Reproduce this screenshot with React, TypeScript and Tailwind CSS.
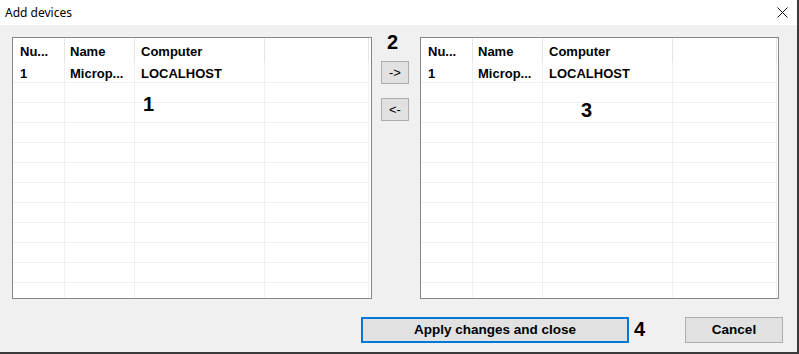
import React from 'react';

interface DeviceRow {
  num: string;
  name: string;
  computer: string;
}

const devices: DeviceRow[] = [{ num: '1', name: 'Microp...', computer: 'LOCALHOST' }];

// empty grid rows under the data, the list clips the last one
const emptyRows = Array.from({ length: 11 }, (_, i) => i);

function DeviceList({ widthClass }: { widthClass: string }) {
  return (
    <div className={`${widthClass} h-[262px] border border-[#828790] bg-white overflow-hidden`}>
      {/* header */}
      <div className="flex h-[24px] w-[356px] font-bold text-[13px] text-black">
        <div className="w-[52px] pl-[7px] pt-[4px] flex items-center border-r border-[#e5e5e5]">Nu...</div>
        <div className="w-[70px] pl-[5px] pt-[4px] flex items-center border-r border-[#e5e5e5]">Name</div>
        <div className="w-[130px] pl-[6px] pt-[4px] flex items-center border-r border-[#e5e5e5]">Computer</div>
        <div className="w-[104px] border-r border-[#e5e5e5]" />
      </div>
      {devices.map((d) => (
        <div key={d.num} className="flex h-[21px] w-[356px] border-b border-[#f0f0f0] font-bold text-[13px] text-black">
          <div className="w-[52px] pl-[7px] pt-[3px] flex items-center border-r border-[#f0f0f0]">{d.num}</div>
          <div className="w-[70px] pl-[5px] pt-[3px] flex items-center border-r border-[#f0f0f0]">{d.name}</div>
          <div className="w-[130px] pl-[6px] pt-[3px] flex items-center border-r border-[#f0f0f0]">{d.computer}</div>
          <div className="w-[104px] border-r border-[#f0f0f0]" />
        </div>
      ))}
      {emptyRows.map((i) => (
        <div key={i} className="flex h-[20px] shrink-0 w-[356px] border-b border-[#f0f0f0]">
          <div className="w-[52px] border-r border-[#f0f0f0]" />
          <div className="w-[70px] border-r border-[#f0f0f0]" />
          <div className="w-[130px] border-r border-[#f0f0f0]" />
          <div className="w-[104px] border-r border-[#f0f0f0]" />
        </div>
      ))}
    </div>
  );
}

export default function App() {
  return (
    <div
      className="relative w-[799px] h-[354px] flex flex-col bg-[#f0f0f0] border-r-2 border-b-2 border-[#3a3a3a] text-black"
      style={{ fontFamily: '"Liberation Sans", Arial, sans-serif' }}
    >
      {/* title bar */}
      <div className="h-[25px] bg-white flex items-center justify-between pl-[5px] pr-[8px]">
        <span className="text-[12px]" style={{ fontFamily: '"Noto Sans", sans-serif' }}>Add devices</span>
        <svg width="11" height="11" viewBox="0 0 11 11" className="mr-[1px]">
          <path d="M0.5 0.5 L10.5 10.5 M10.5 0.5 L0.5 10.5" stroke="#111" strokeWidth="1" fill="none" />
        </svg>
      </div>

      {/* lists */}
      <div className="flex pt-[12px] pl-[12px]">
        <DeviceList widthClass="w-[360px]" />
        <div className="w-[48px] flex flex-col pl-[9px] pt-[24px]">
          <button className="w-[28px] h-[23px] bg-[#e1e1e1] border border-[#adadad] text-[13px] leading-none">-&gt;</button>
          <button className="w-[28px] h-[23px] mt-[14px] bg-[#e1e1e1] border border-[#adadad] text-[13px] leading-none">&lt;-</button>
        </div>
        <DeviceList widthClass="w-[359px]" />
      </div>

      {/* bottom buttons */}
      <div className="flex justify-end pt-[18px] pr-[14px]">
        <button className="w-[268px] h-[26px] bg-[#e1e1e1] border-2 border-[#0078d7] font-bold text-[13.5px]">
          Apply changes and close
        </button>
        <div className="w-[56px]" />
        <button className="w-[98px] h-[26px] bg-[#e1e1e1] border border-[#adadad] font-bold text-[13.5px]">
          Cancel
        </button>
      </div>

      {/* annotation numbers */}
      <span className="absolute left-[143px] top-[94px] text-[20px] leading-[20px] font-bold">1</span>
      <span className="absolute left-[387px] top-[32px] text-[20px] leading-[20px] font-bold">2</span>
      <span className="absolute left-[581px] top-[100px] text-[20px] leading-[20px] font-bold">3</span>
      <span className="absolute left-[634px] top-[319px] text-[20px] leading-[20px] font-bold">4</span>
    </div>
  );
}
